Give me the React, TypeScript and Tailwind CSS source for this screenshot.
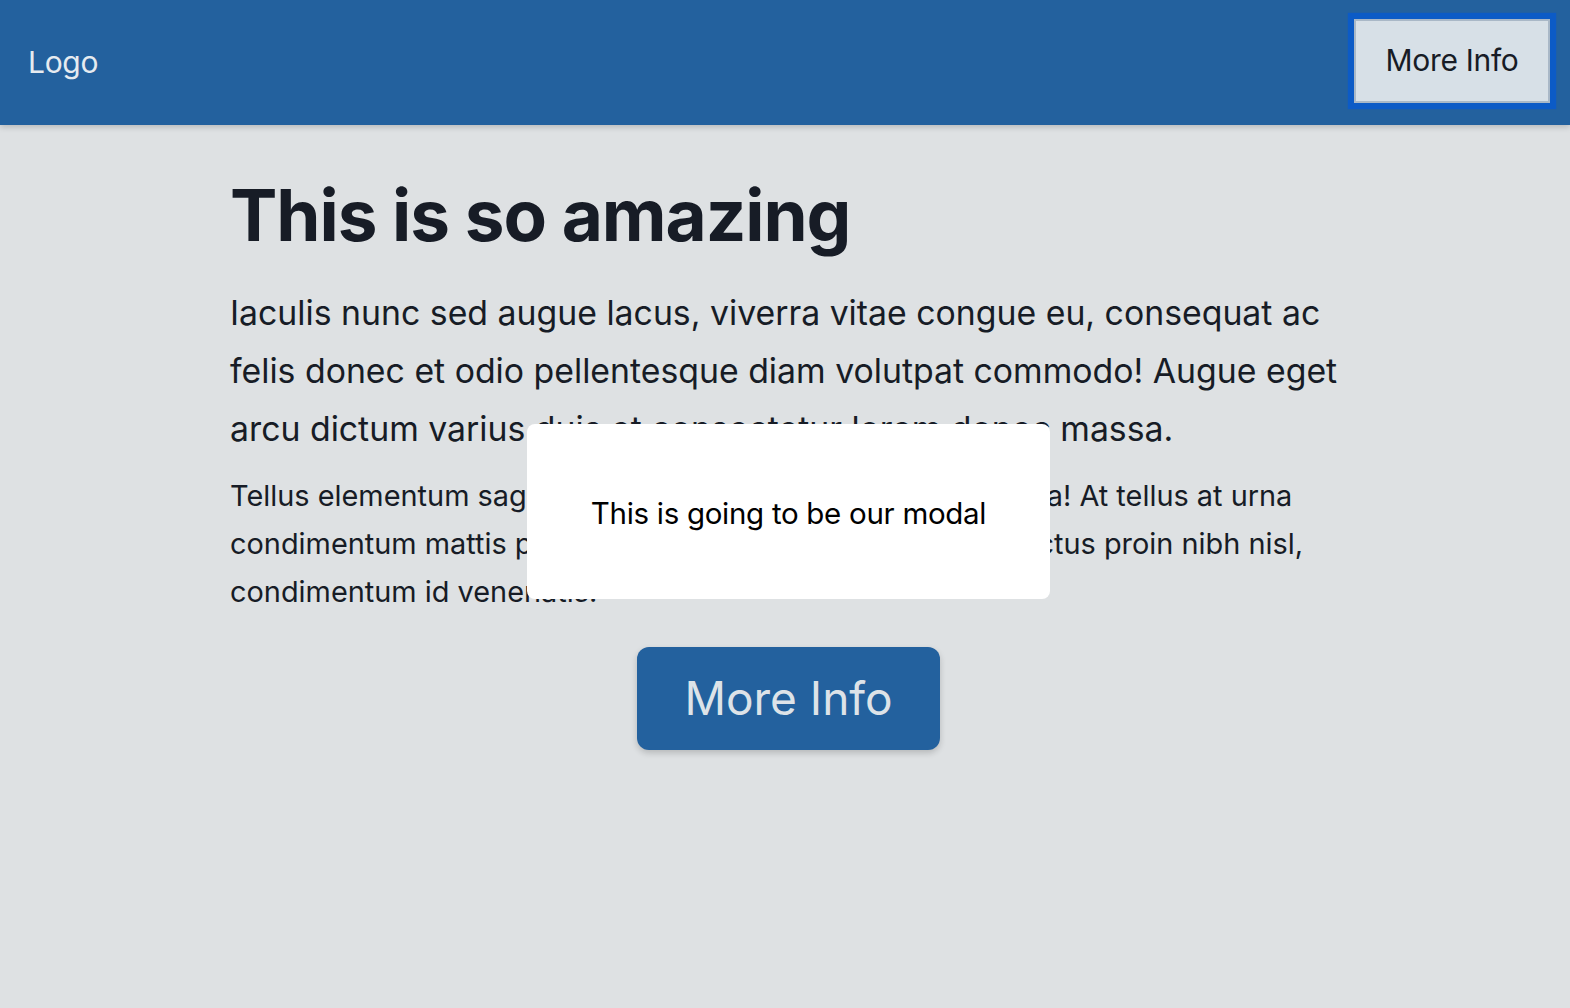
import { useState } from "react";

const font = { fontFamily: "Inter, 'Noto Sans', sans-serif" };

export default function App() {
  const [open] = useState(true);

  return (
    <div className="relative min-h-[1008px] bg-[#dee1e3] text-[#171c26]" style={font}>
      <header className="flex h-[125px] items-center justify-between bg-[#23619e] pl-[28px] pr-[20px] shadow-[0_2px_6px_rgba(0,0,0,0.18)]">
        <a href="#" className="text-[30px] tracking-[-0.01em] text-[#e6ebf0]">
          Logo
        </a>
        <button className="-mt-[4px] h-[84px] w-[196px] border-2 border-[#a9b8c7] bg-[#d7e0e7] text-[30px] tracking-[-0.01em] text-[#171c26] shadow-[0_0_1px_6px_#0c5bc6]">
          More Info
        </button>
      </header>

      <main className="ml-[230px] w-[1120px] pt-[46px]">
        <h1 className="text-[71px] leading-[88px] font-bold tracking-[-0.015em]">This is so amazing</h1>
        <p className="mt-[25px] text-[33.8px] leading-[58px]">
          Iaculis nunc sed augue lacus, viverra vitae congue eu, consequat ac felis donec et odio pellentesque diam volutpat
          commodo! Augue eget arcu dictum varius duis et consectetur lorem donec massa.
        </p>
        <p className="mt-[14px] text-[28.9px] leading-[48px]">
          Tellus elementum sagittis vitae et leo duis ut diam quam nulla! At tellus at urna condimentum mattis pellentesque
          id nibh tortor id aliquet lectus proin nibh nisl, condimentum id venenatis.
        </p>
        <div className="mt-[31px] flex justify-center pr-[3px]">
          <button className="h-[103px] w-[303px] rounded-[12px] bg-[#23619e] text-[46px] text-[#dde3e8] shadow-[0_3px_6px_rgba(0,0,0,0.18)]">
            More Info
          </button>
        </div>
      </main>

      {open && (
        <div className="absolute left-[527px] top-[424px] flex h-[175px] w-[523px] items-center justify-center rounded-[8px] bg-white pt-[3px]">
          <p className="text-[29.5px] tracking-[-0.01em] text-black">This is going to be our modal</p>
        </div>
      )}
    </div>
  );
}
